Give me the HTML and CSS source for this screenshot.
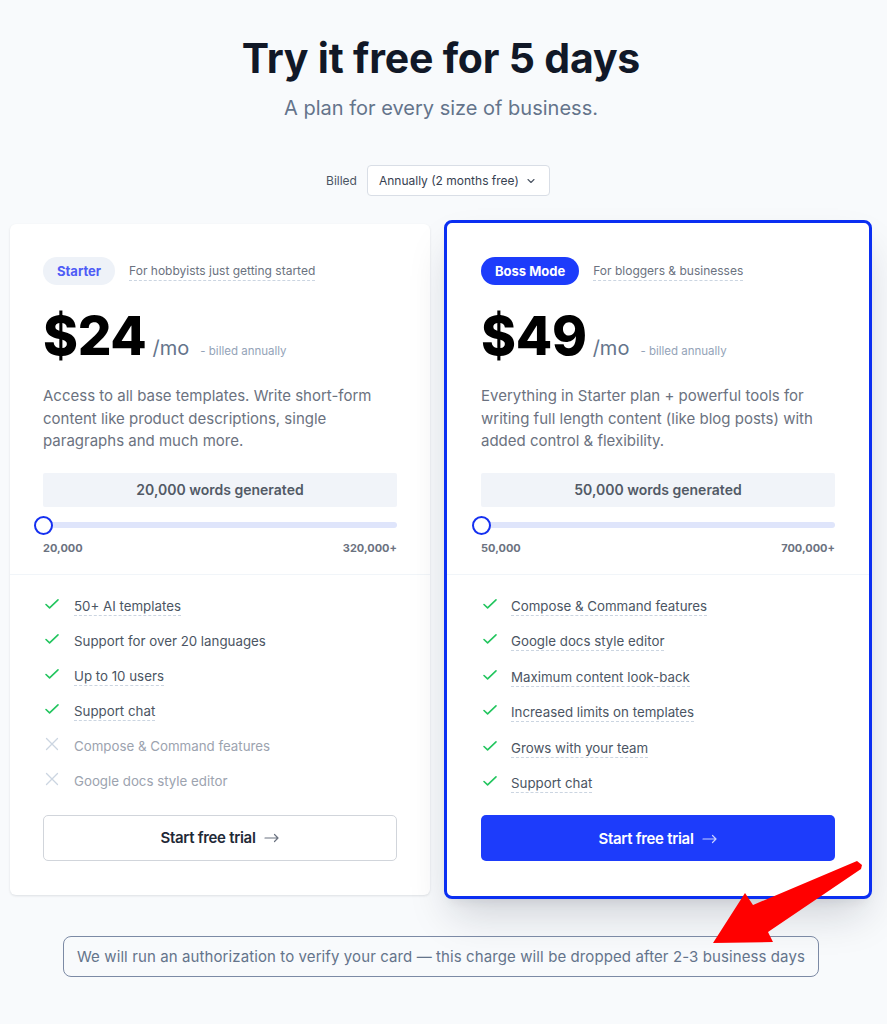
FILE: index.html
```html
<!DOCTYPE html>
<html lang="en">
<head>
<meta charset="utf-8">
<title>Pricing</title>
<link rel="stylesheet" href="styles.css">
</head>
<body>
<main class="page">
  <h1 class="title">Try it free for 5 days</h1>
  <p class="subtitle">A plan for every size of business.</p>

  <div class="billing">
    <span class="billing-label">Billed</span>
    <div class="select">
      <span>Annually (2 months free)</span>
      <svg class="chevron" width="10" height="10" viewBox="0 0 10 10"><path d="M2 3.5l3 3 3-3" fill="none" stroke="#4b5563" stroke-width="1.1" stroke-linecap="round" stroke-linejoin="round"/></svg>
    </div>
  </div>

  <div class="plans">
    <section class="card card-starter">
      <div class="card-top">
        <div class="badge-row">
          <span class="badge badge-light">Starter</span>
          <span class="tagline">For hobbyists just getting started</span>
        </div>
        <div class="price-row">
          <span class="price">$24</span>
          <span class="per">/mo</span>
          <span class="billed">- billed annually</span>
        </div>
        <p class="desc">Access to all base templates. Write short-form content like product descriptions, single paragraphs and much more.</p>
        <div class="words">20,000 words generated</div>
        <div class="slider"><span class="track"></span><span class="thumb"></span></div>
        <div class="range"><span>20,000</span><span>320,000+</span></div>
      </div>
      <div class="card-bottom">
        <ul class="features">
          <li><svg class="ico" viewBox="0 0 18 18"><path d="M3 9.5l3.6 3.4L15 4.8" fill="none" stroke="#22c55e" stroke-width="1.6" stroke-linecap="round" stroke-linejoin="round"/></svg><span class="feat">50+ AI templates</span></li>
          <li><svg class="ico" viewBox="0 0 18 18"><path d="M3 9.5l3.6 3.4L15 4.8" fill="none" stroke="#22c55e" stroke-width="1.6" stroke-linecap="round" stroke-linejoin="round"/></svg><span class="feat plain">Support for over 20 languages</span></li>
          <li><svg class="ico" viewBox="0 0 18 18"><path d="M3 9.5l3.6 3.4L15 4.8" fill="none" stroke="#22c55e" stroke-width="1.6" stroke-linecap="round" stroke-linejoin="round"/></svg><span class="feat">Up to 10 users</span></li>
          <li><svg class="ico" viewBox="0 0 18 18"><path d="M3 9.5l3.6 3.4L15 4.8" fill="none" stroke="#22c55e" stroke-width="1.6" stroke-linecap="round" stroke-linejoin="round"/></svg><span class="feat">Support chat</span></li>
          <li class="off"><svg class="ico" viewBox="0 0 18 18"><path d="M3.5 3.5l11 11M14.5 3.5l-11 11" fill="none" stroke="#cbd5e1" stroke-width="1.3" stroke-linecap="round"/></svg><span class="feat plain">Compose &amp; Command features</span></li>
          <li class="off"><svg class="ico" viewBox="0 0 18 18"><path d="M3.5 3.5l11 11M14.5 3.5l-11 11" fill="none" stroke="#cbd5e1" stroke-width="1.3" stroke-linecap="round"/></svg><span class="feat plain">Google docs style editor</span></li>
        </ul>
        <a class="btn btn-outline">Start free trial <svg class="arrow" width="16" height="10" viewBox="0 0 16 10"><path d="M1 5h13M10.5 1.5L14 5l-3.5 3.5" fill="none" stroke="currentColor" stroke-width="1.2" stroke-linecap="round" stroke-linejoin="round"/></svg></a>
      </div>
    </section>

    <section class="card card-boss">
      <div class="card-top">
        <div class="badge-row">
          <span class="badge badge-blue">Boss Mode</span>
          <span class="tagline">For bloggers &amp; businesses</span>
        </div>
        <div class="price-row">
          <span class="price">$49</span>
          <span class="per">/mo</span>
          <span class="billed">- billed annually</span>
        </div>
        <p class="desc">Everything in Starter plan + powerful tools for writing full length content (like blog posts) with added control &amp; flexibility.</p>
        <div class="words">50,000 words generated</div>
        <div class="slider"><span class="track"></span><span class="thumb"></span></div>
        <div class="range"><span>50,000</span><span>700,000+</span></div>
      </div>
      <div class="card-bottom">
        <ul class="features">
          <li><svg class="ico" viewBox="0 0 18 18"><path d="M3 9.5l3.6 3.4L15 4.8" fill="none" stroke="#22c55e" stroke-width="1.6" stroke-linecap="round" stroke-linejoin="round"/></svg><span class="feat">Compose &amp; Command features</span></li>
          <li><svg class="ico" viewBox="0 0 18 18"><path d="M3 9.5l3.6 3.4L15 4.8" fill="none" stroke="#22c55e" stroke-width="1.6" stroke-linecap="round" stroke-linejoin="round"/></svg><span class="feat">Google docs style editor</span></li>
          <li><svg class="ico" viewBox="0 0 18 18"><path d="M3 9.5l3.6 3.4L15 4.8" fill="none" stroke="#22c55e" stroke-width="1.6" stroke-linecap="round" stroke-linejoin="round"/></svg><span class="feat">Maximum content look-back</span></li>
          <li><svg class="ico" viewBox="0 0 18 18"><path d="M3 9.5l3.6 3.4L15 4.8" fill="none" stroke="#22c55e" stroke-width="1.6" stroke-linecap="round" stroke-linejoin="round"/></svg><span class="feat">Increased limits on templates</span></li>
          <li><svg class="ico" viewBox="0 0 18 18"><path d="M3 9.5l3.6 3.4L15 4.8" fill="none" stroke="#22c55e" stroke-width="1.6" stroke-linecap="round" stroke-linejoin="round"/></svg><span class="feat">Grows with your team</span></li>
          <li><svg class="ico" viewBox="0 0 18 18"><path d="M3 9.5l3.6 3.4L15 4.8" fill="none" stroke="#22c55e" stroke-width="1.6" stroke-linecap="round" stroke-linejoin="round"/></svg><span class="feat">Support chat</span></li>
        </ul>
        <a class="btn btn-blue">Start free trial <svg class="arrow" width="16" height="10" viewBox="0 0 16 10"><path d="M1 5h13M10.5 1.5L14 5l-3.5 3.5" fill="none" stroke="currentColor" stroke-width="1.2" stroke-linecap="round" stroke-linejoin="round"/></svg></a>
      </div>
    </section>
  </div>

  <div class="notice-wrap">
    <p class="notice">We will run an authorization to verify your card — this charge will be dropped after 2-3 business days</p>
  </div>

  <svg class="annot" width="170" height="100" viewBox="0 0 170 100"><polygon points="13,93 45,43 53,55 157,11 162,15 161,19 68,82 73,92" fill="#ff0000"/></svg>
</main>
</body>
</html>
```

FILE: styles.css
```css
* { box-sizing: border-box; }

html, body {
  margin: 0;
  padding: 0;
  background: #f8fafc;
}

body {
  font-family: Inter, "Noto Sans", "Liberation Sans", sans-serif;
  color: #111827;
}

.page {
  position: relative;
  width: 887px;
  min-height: 1024px;
  padding: 34px 0 40px 10px;
}

.title {
  margin: 0;
  width: 862px;
  text-align: center;
  font-size: 41px;
  line-height: 48px;
  font-weight: 700;
  letter-spacing: -0.2px;
  color: #111827;
}

.subtitle {
  margin: 12px 0 0;
  width: 862px;
  text-align: center;
  font-size: 20px;
  line-height: 28px;
  color: #64748b;
}

.billing {
  width: 862px;
  margin-top: 43px;
  display: flex;
  justify-content: center;
  align-items: center;
  gap: 10px;
  padding-right: 6px;
}

.billing-label {
  font-size: 12px;
  color: #4b5563;
}

.select {
  width: 183px;
  height: 31px;
  display: flex;
  align-items: center;
  justify-content: space-between;
  padding: 0 13px 0 11px;
  background: #fff;
  border: 1px solid #d9dee6;
  border-radius: 4px;
  font-size: 12px;
  color: #374151;
}

.chevron { display: block; }

.plans {
  margin-top: 24px;
  display: flex;
  align-items: flex-start;
  gap: 14px;
}

.card {
  background: #fff;
  border-radius: 6px;
}

.card-starter {
  width: 420px;
  margin-top: 4px;
  box-shadow: 0 1px 3px rgba(15, 23, 42, 0.08), 0 1px 2px rgba(15, 23, 42, 0.04);
}

.card-boss {
  width: 428px;
  border: 3px solid #0b2ff2;
  border-radius: 8px;
  box-shadow: 0 22px 40px -8px rgba(15, 23, 42, 0.18), 0 8px 12px -6px rgba(15, 23, 42, 0.08);
}

.card-top {
  padding: 33px 33px 18px;
  border-bottom: 1px solid #f1f5f9;
}

.card-bottom {
  padding: 19px 33px 34px;
}

.card-boss .card-top { padding: 34px 34px 18px; }
.card-boss .card-bottom { padding: 19px 34px 35px; }

.badge-row {
  display: flex;
  align-items: center;
  gap: 14px;
  height: 28px;
}

.badge {
  height: 28px;
  display: inline-flex;
  align-items: center;
  padding: 0 14px;
  border-radius: 14px;
  font-size: 13px;
  font-weight: 700;
}

.badge-light {
  background: #eef2f8;
  color: #4f5cf6;
}

.badge-blue {
  background: #1d3cfb;
  color: #fff;
}

.tagline {
  font-size: 12px;
  line-height: 16px;
  color: #6b7280;
  border-bottom: 1.5px dashed #cbd5e1;
  padding-bottom: 1px;
  margin-top: 2px;
}

.price-row {
  margin-top: 25px;
  display: flex;
  align-items: baseline;
  height: 52px;
}

.price {
  font-size: 53px;
  line-height: 52px;
  font-weight: 800;
  color: #000;
  letter-spacing: -0.3px;
}

.per {
  margin-left: 6px;
  font-size: 20px;
  color: #64748b;
}

.billed {
  margin-left: 11px;
  font-size: 11.5px;
  color: #94a3b8;
}

.desc {
  margin: 23px 0 0;
  font-size: 15px;
  line-height: 22.5px;
  color: #6b7280;
}

.words {
  margin-top: 20px;
  height: 34px;
  display: flex;
  align-items: center;
  justify-content: center;
  background: #f1f4f9;
  border-radius: 2px;
  font-size: 14px;
  font-weight: 600;
  color: #525a66;
}

.slider {
  position: relative;
  margin-top: 9px;
  height: 18px;
}

.track {
  display: block;
  position: absolute;
  left: 0;
  right: 0;
  top: 6px;
  height: 6px;
  border-radius: 3px;
  background: #dfe5fb;
}

.thumb {
  position: absolute;
  left: -9px;
  top: 0;
  width: 19px;
  height: 19px;
  border-radius: 50%;
  background: #fff;
  border: 2px solid #1530f0;
}

.range {
  margin-top: 6px;
  display: flex;
  justify-content: space-between;
  font-size: 11px;
  line-height: 16px;
  font-weight: 700;
  color: #6b7280;
}

.features {
  list-style: none;
  margin: 0;
  padding: 0;
  display: flex;
  flex-direction: column;
  gap: 15px;
}

.features li {
  display: flex;
  align-items: center;
  height: 20px;
  gap: 13px;
  font-size: 13.3px;
  color: #4b5563;
}

.card-boss .features { gap: 15.5px; }
.card-boss .features li { gap: 12px; }

.ico {
  width: 18px;
  height: 18px;
  flex: none;
}

.feat {
  line-height: 18px;
  border-bottom: 1.5px dashed #cbd5e1;
  margin-top: 5px;
}

.feat.plain {
  border-bottom-color: transparent;
}

.features li.off { color: #9ca3af; }

.btn {
  margin-top: 24px;
  height: 46px;
  display: flex;
  align-items: center;
  justify-content: center;
  gap: 8px;
  border-radius: 5px;
  font-size: 15px;
  font-weight: 600;
  letter-spacing: -0.3px;
}

.card-starter .btn { margin-top: 26px; }

.arrow { display: block; margin-top: 1px; }

.btn-outline {
  background: #fff;
  border: 1px solid #d1d5db;
  color: #1f2937;
}

.btn-outline .arrow { color: #6b7280; }

.btn-blue {
  background: #1d3cfb;
  color: #fff;
}

.btn-blue .arrow { color: #c7d0ff; }

.notice-wrap {
  width: 862px;
  margin-top: 37px;
  display: flex;
  justify-content: center;
}

.notice {
  margin: 0;
  padding: 8px 13px;
  border: 1px solid #7c8aa5;
  border-radius: 8px;
  font-size: 15px;
  line-height: 23px;
  letter-spacing: 0.1px;
  color: #64748b;
}

.annot {
  position: absolute;
  left: 700px;
  top: 850px;
  pointer-events: none;
}
```
